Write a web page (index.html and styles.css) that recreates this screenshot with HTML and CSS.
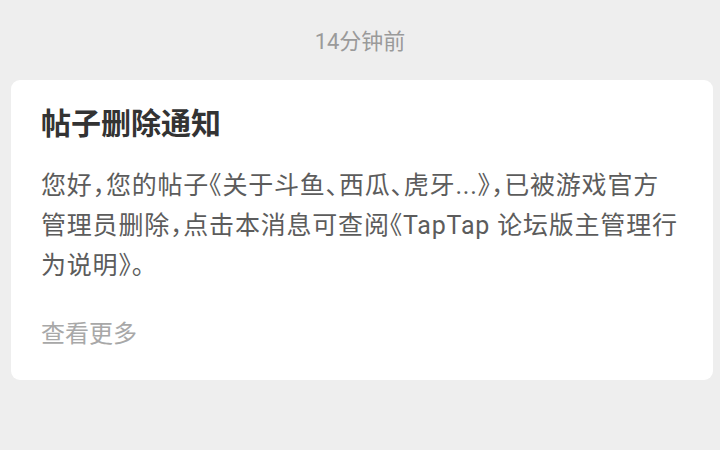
FILE: index.html
```html
<!DOCTYPE html>
<html lang="zh-CN">
<head>
    <meta charset="UTF-8">
    <meta name="viewport" content="width=device-width, initial-scale=1.0">
    <title>消息通知</title>
    <link rel="stylesheet" href="styles.css">
</head>
<body>
    <div class="time">14分钟前</div>

    <div class="card">
        <h2 class="card-title">帖子删除通知</h2>
        <p class="card-text">您好，您的帖子《关于斗鱼、西瓜、虎牙...》，已被游戏官方管理员删除，点击本消息可查阅《TapTap 论坛版主管理行为说明》。</p>
        <a class="more" href="#">查看更多</a>
    </div>
</body>
</html>
```

FILE: styles.css
```css
body {
    margin: 0;
    background: #eeeeee;
    font-family: Roboto, "Noto Sans CJK SC", sans-serif;
}
.time {
    height: 80px;
    line-height: 84px;
    text-align: center;
    font-size: 22px;
    color: #9a9a9a;
}
.card {
    width: 702px;
    margin-left: 11px;
    box-sizing: border-box;
    padding: 24px 30px 26px 30px;
    background: white;
    border-radius: 9px;
}
.card-title {
    margin: 0;
    font-size: 30px;
    line-height: 40px;
    font-weight: 700;
    color: #333333;
}
.card-text {
    margin: 22px 0 0 0;
    font-size: 25px;
    line-height: 40px;
    letter-spacing: 0.8px;
    color: #5c5c5c;
    font-feature-settings: "halt";
}
.more {
    display: block;
    margin-top: 28px;
    font-size: 24px;
    line-height: 40px;
    color: #a8a8a8;
    text-decoration: none;
}
```
